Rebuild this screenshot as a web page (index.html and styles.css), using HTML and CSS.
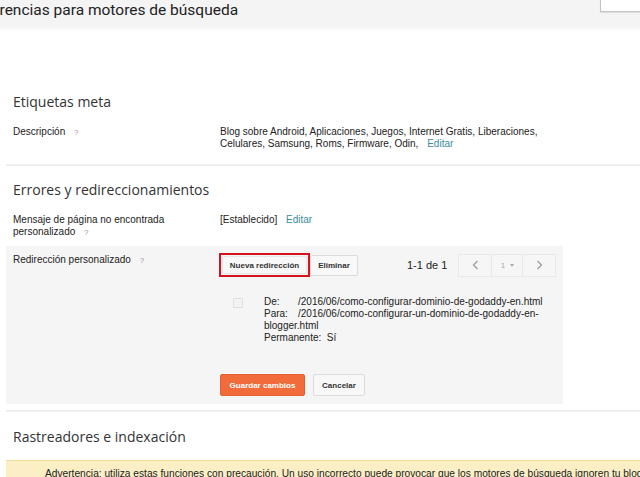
FILE: index.html
```html
<!DOCTYPE html>
<html lang="es">
  <head>
    <meta charset="UTF-8" />
    <meta name="viewport" content="width=device-width, initial-scale=1.0" />
    <title>Preferencias para motores de búsqueda</title>
    <link rel="stylesheet" href="styles.css">
  </head>

  <body>
    <!-- cabecera -->
    <div class="topbar">
      <h1 class="page-title">Preferencias para motores de búsqueda</h1>
      <div class="topbar-btn"></div>
    </div>

    <!-- etiquetas meta -->
    <div class="section section-meta">
      <h2 class="section-title">Etiquetas meta</h2>
      <div class="row">
        <div class="row-label">Descripción <span class="help">?</span></div>
        <div class="row-value">
          Blog sobre Android, Aplicaciones, Juegos, Internet Gratis, Liberaciones,<br>
          Celulares, Samsung, Roms, Firmware, Odin, <a class="link" href="#">Editar</a>
        </div>
      </div>
    </div>
    <div class="divider"></div>

    <!-- errores -->
    <div class="section section-errors">
      <h2 class="section-title">Errores y redireccionamientos</h2>
      <div class="row">
        <div class="row-label">Mensaje de página no encontrada<br>personalizado <span class="help">?</span></div>
        <div class="row-value">[Establecido] <a class="link" href="#">Editar</a></div>
      </div>
    </div>

    <div class="panel">
      <div class="panel-label">Redirección personalizado <span class="help">?</span></div>
      <div class="panel-body">
        <div class="toolbar">
          <div class="highlight"><button class="btn btn-new">Nueva redirección</button></div>
          <button class="btn btn-del">Eliminar</button>
          <span class="count">1-1 de 1</span>
          <div class="pager">
            <span class="pager-item">
              <svg width="7" height="10" viewBox="0 0 7 10"><path d="M5.5 1 L1.5 5 L5.5 9" fill="none" stroke="#999" stroke-width="1.2"/></svg>
            </span>
            <span class="pager-item pager-num">1 <span class="caret"></span></span>
            <span class="pager-item">
              <svg width="7" height="10" viewBox="0 0 7 10"><path d="M1.5 1 L5.5 5 L1.5 9" fill="none" stroke="#999" stroke-width="1.2"/></svg>
            </span>
          </div>
        </div>

        <div class="entry">
          <span class="check"></span>
          <div class="entry-text">
            <span class="key">De:</span>/2016/06/como-configurar-dominio-de-godaddy-en.html<br>
            <span class="key">Para:</span>/2016/06/como-configurar-un-dominio-de-godaddy-en-<br>
            blogger.html<br>
            Permanente:&nbsp; Sí
          </div>
        </div>

        <div class="actions">
          <button class="btn btn-save">Guardar cambios</button>
          <button class="btn btn-cancel">Cancelar</button>
        </div>
      </div>
    </div>
    <div class="divider divider-low"></div>

    <!-- rastreadores -->
    <div class="section section-crawl">
      <h2 class="section-title">Rastreadores e indexación</h2>
    </div>
    <div class="warning">
      Advertencia: utiliza estas funciones con precaución. Un uso incorrecto puede provocar que los motores de búsqueda ignoren tu blog.
    </div>
  </body>
</html>
```

FILE: styles.css
```css
* {
  box-sizing: border-box;
}
html,
body {
  margin: 0;
  padding: 0;
  overflow: hidden;
}
body {
  font-family: "Liberation Sans", Arial, sans-serif;
  font-size: 10px;
  color: #222;
  background: #fff;
}

/* cabecera */
.topbar {
  height: 32px;
  display: flex;
  align-items: flex-start;
  background: linear-gradient(#f4f4f4 0, #f4f4f4 26px, #fff 32px);
}
.page-title {
  margin: 0 0 0 -37px;
  font-family: Roboto, "Liberation Sans", sans-serif;
  font-weight: 400;
  font-size: 15.5px;
  line-height: 20px;
  color: #222;
  white-space: nowrap;
}
.topbar-btn {
  margin-left: auto;
  width: 40px;
  height: 12px;
  background: #fff;
  border: 1px solid #c4c4c4;
  border-top: 0;
  border-right: 0;
  box-shadow: 0 1px 1px rgba(0, 0, 0, 0.08);
}

/* secciones */
.section {
  padding-left: 13px;
}
.section-title {
  margin: 0;
  font-family: "Open Sans", sans-serif;
  font-weight: 400;
  font-size: 14px;
  line-height: 20px;
  color: #333;
}
.section-meta {
  padding-top: 60px;
}
.section-errors {
  padding-top: 14px;
}
.section-crawl {
  padding-top: 15px;
}
.row {
  display: grid;
  grid-template-columns: 207px 1fr;
  margin-top: 14px;
  line-height: 12px;
}
.help {
  margin-left: 6px;
  font-size: 8px;
  color: #999;
}
.link {
  margin-left: 6px;
  color: #3a8c9c;
  text-decoration: none;
}
.divider {
  margin: 14px 0 0 6px;
  border-top: 2px solid #eee;
}
.divider-low {
  margin-top: 6px;
}

/* redirecciones */
.panel {
  display: grid;
  grid-template-columns: 213px 1fr;
  width: 557px;
  margin: 7px 0 0 6px;
  padding: 7px 0 8px 0;
  background: #f5f5f5;
}
.panel-label {
  padding: 1px 0 0 7px;
  line-height: 12px;
}
.toolbar {
  display: flex;
  align-items: center;
  height: 24px;
}
.btn {
  font-family: "Liberation Sans", Arial, sans-serif;
  font-size: 8px;
  font-weight: bold;
  color: #333;
  background: #f8f8f8;
  border: 1px solid #dcdcdc;
  border-radius: 2px;
  padding: 0;
  cursor: pointer;
}
.highlight {
  width: 91px;
  height: 24px;
  border: 2px solid #d4141c;
  padding: 1px;
  display: flex;
}
.btn-new {
  flex: 1;
  border-color: #e6e6e6;
}
.btn-del {
  width: 48px;
  height: 21px;
}
.count {
  margin-left: 49px;
  font-size: 11px;
  color: #222;
}
.pager {
  display: flex;
  margin-left: 11px;
  height: 23px;
  border: 1px solid #e8e8e8;
  background: #f6f6f6;
}
.pager-item {
  width: 32px;
  display: flex;
  align-items: center;
  justify-content: center;
}
.pager-num {
  border-left: 1px solid #e8e8e8;
  border-right: 1px solid #e8e8e8;
  color: #aaa;
  font-size: 8px;
  gap: 5px;
}
.caret {
  width: 0;
  height: 0;
  border-left: 2.5px solid transparent;
  border-right: 2.5px solid transparent;
  border-top: 3px solid #aaa;
}
.entry {
  display: flex;
  margin: 19px 0 0 14px;
  line-height: 12px;
}
.check {
  width: 10px;
  height: 10px;
  margin-top: 2px;
  border: 1px solid #e0e0e0;
  background: #f2f2f2;
}
.entry-text {
  margin-left: 21px;
  color: #222;
}
.key {
  display: inline-block;
  width: 34px;
}
.actions {
  display: flex;
  gap: 8px;
  margin-top: 30px;
  padding-left: 1px;
}
.btn-save {
  width: 85px;
  height: 22px;
  background: #f26b3a;
  border-color: #e4602f;
  color: #fff;
}
.btn-cancel {
  width: 52px;
  height: 22px;
}

/* aviso */
.warning {
  margin: 13px 0 0 6px;
  padding: 7px 0 10px 39px;
  background: #fcefc6;
  border-top: 1px solid #f0dc9c;
  font-size: 10.2px;
  line-height: 12px;
  white-space: nowrap;
  color: #222;
}
```
